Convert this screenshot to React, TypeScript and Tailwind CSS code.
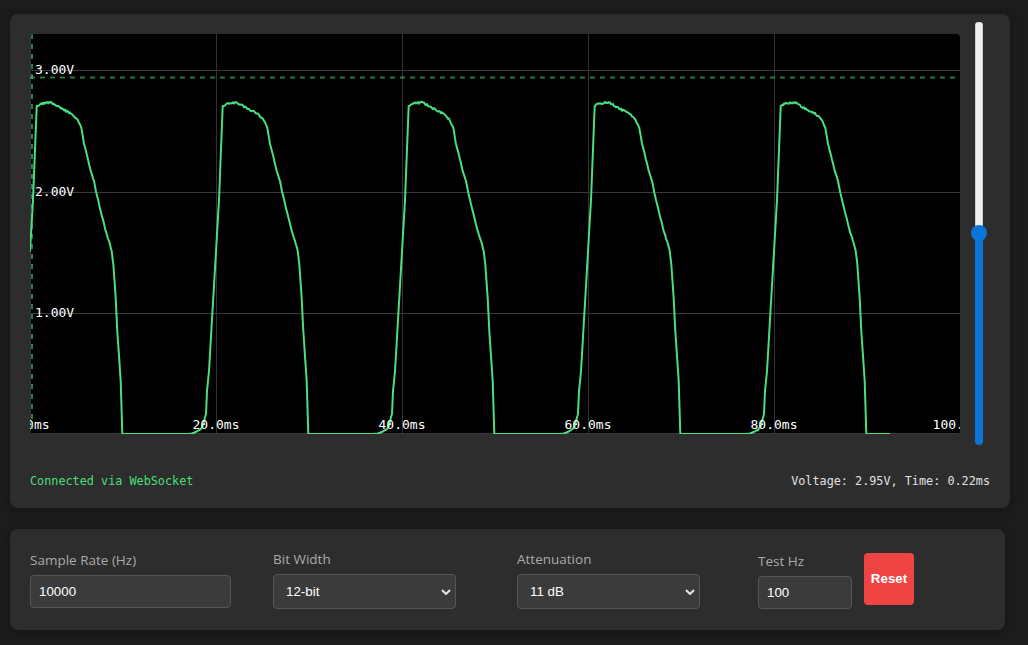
import React from "react";

// Scope geometry (canvas pixels)
const W = 930;
const H = 400;
const VMAX = 3.3;
const PERIOD_PX = 186; // 20 ms per division
const DATA_END = 860;

const vy = (v: number) => H * (1 - v / VMAX);

// One period of the captured waveform, [dx from rising edge, y on canvas]
const PROFILE: [number, number][] = [
  [-30, 400], [-25, 399.7], [-20, 398], [-14, 394], [-10, 380], [-9, 357], [-7, 337],
  [3, 166], [6.7, 72], [10.7, 69.7], [20.7, 68.3], [30.7, 74.3], [40.7, 79.3],
  [47.3, 85.3], [51.3, 93.7], [54, 110], [56.7, 120], [60.7, 137], [64, 147],
  [66.3, 158.7], [70.7, 177], [75.7, 197], [79, 207], [81.7, 217], [83.3, 230],
  [85.7, 264], [87.3, 297], [90.7, 347], [92.3, 400], [156, 400],
];

const hash = (n: number) => {
  const s = Math.sin(n * 127.1 + 311.7) * 43758.5453;
  return s - Math.floor(s) - 0.5;
};

function sampleProfile(dx: number) {
  for (let i = 0; i < PROFILE.length - 1; i++) {
    const [x0, y0] = PROFILE[i];
    const [x1, y1] = PROFILE[i + 1];
    if (dx >= x0 && dx <= x1) {
      const t = x1 === x0 ? 0 : (dx - x0) / (x1 - x0);
      return y0 + (y1 - y0) * t;
    }
  }
  return H;
}

function buildTrace() {
  const xs = new Set<number>();
  for (let x = 0; x <= DATA_END; x++) xs.add(x);
  for (let k = 0; k < 5; k++) {
    PROFILE.forEach(([dx]) => {
      const x = k * PERIOD_PX + dx;
      if (x >= 0 && x <= DATA_END) xs.add(x);
    });
  }
  const sorted = Array.from(xs).sort((a, b) => a - b);
  return sorted
    .map((x) => {
      const k = Math.floor((x + 30) / PERIOD_PX);
      const dx = x - k * PERIOD_PX;
      let y = sampleProfile(dx);
      const isVertex = PROFILE.some(([px]) => Math.abs(px - dx) < 0.01);
      if (!isVertex && y < 396) {
        const amp = dx > 5 && dx < 50 ? 1.8 : dx < -8 ? 2.4 : 1.2;
        y += hash(x) * amp;
      }
      return `${x.toFixed(1)},${y.toFixed(1)}`;
    })
    .join(" ");
}

const TRACE = buildTrace();

function Scope() {
  const volts = [1, 2, 3];
  const divs = [0, 1, 2, 3, 4, 5];
  return (
    <div className="h-[400px] w-[930px] shrink-0 overflow-hidden rounded-[4px] bg-black">
      <svg width={W} height={H} className="block font-['DejaVu_Sans_Mono',monospace] text-[13px]">
        {/* grid */}
        {volts.map((v) => (
          <line key={`h${v}`} x1={0} x2={W} y1={Math.round(vy(v)) + 0.5} y2={Math.round(vy(v)) + 0.5} stroke="#3a3a3a" strokeWidth={1} />
        ))}
        <line x1={0} x2={W} y1={H - 0.5} y2={H - 0.5} stroke="#3a3a3a" strokeWidth={1} />
        {divs.map((d) => (
          <line key={`v${d}`} x1={d * PERIOD_PX + 0.5} x2={d * PERIOD_PX + 0.5} y1={0} y2={H} stroke="#333" strokeWidth={1} />
        ))}

        {/* voltage labels */}
        {volts.map((v) => (
          <text key={`lv${v}`} x={5} y={vy(v) + 4} fill="#fff">
            {v.toFixed(2)}V
          </text>
        ))}

        {/* signal */}
        <polyline points={TRACE} fill="none" stroke="#4ade80" strokeWidth={2} strokeLinejoin="round" />

        {/* time labels */}
        {divs.map((d) => (
          <text key={`lt${d}`} x={d * PERIOD_PX} y={395} fill="#fff" textAnchor="middle">
            {(d * 20).toFixed(1)}ms
          </text>
        ))}

        {/* cursor */}
        <line x1={0} x2={W} y1={43.5} y2={43.5} stroke="#4ade80" strokeOpacity={0.55} strokeWidth={2} strokeDasharray="5 5" />
        <line x1={2} x2={2} y1={0} y2={H} stroke="#4ade80" strokeOpacity={0.55} strokeWidth={2} strokeDasharray="5 5" />
      </svg>
    </div>
  );
}

function VerticalSlider() {
  return (
    <div className="relative ml-[11px] flex h-[423px] w-[16px] justify-center">
      <div className="flex h-full w-[8px] flex-col overflow-hidden rounded-full">
        <div className="flex-1 bg-[#efefef] shadow-[inset_0_0_0_1px_#cdcdcd]" />
        <div className="h-[212px] bg-[#0a75d6]" />
      </div>
      <div className="absolute left-0 top-[203px] h-4 w-4 rounded-full bg-[#0a75d6]" />
    </div>
  );
}

function Chevron() {
  return (
    <svg width="10" height="6" viewBox="0 0 10 6" className="pointer-events-none absolute right-[5px] top-1/2 -translate-y-1/2">
      <path d="M1 1 L5 5 L9 1" fill="none" stroke="#e5e5e5" strokeWidth="2" />
    </svg>
  );
}

const labelCls = "mb-[5px] block font-['Open_Sans',sans-serif] text-[13.5px] leading-[20px] text-[#aaaaaa]";
const fieldCls =
  "rounded-[4px] border border-[#555] bg-[#3b3b3b] font-['Liberation_Sans',Arial,sans-serif] text-[13.333px] text-white outline-none";

function SelectField({ label, value, options }: { label: string; value: string; options: string[] }) {
  return (
    <div>
      <label className={labelCls}>{label}</label>
      <div className="relative w-[183px]">
        <select
          defaultValue={value}
          className={`${fieldCls} h-[35px] w-full appearance-none pl-[12px] pr-6`}
        >
          {options.map((o) => (
            <option key={o}>{o}</option>
          ))}
        </select>
        <Chevron />
      </div>
    </div>
  );
}

export default function App() {
  return (
    <div className="min-h-[645px] bg-[#1c1c1c] px-[10px] pt-[14px]">
      {/* Scope card */}
      <div className="w-[1000px] rounded-[8px] bg-[#2d2d2d] px-[20px] pb-[19px] pt-[8px] shadow-[0_2px_8px_rgba(0,0,0,0.35)]">
        <div className="flex items-center">
          <Scope />
          <VerticalSlider />
        </div>
        <div className="mt-[28px] flex justify-between font-['DejaVu_Sans_Mono',monospace] text-[11.8px] leading-[16px]">
          <span className="text-[#4ade80]">Connected via WebSocket</span>
          <span className="text-[#e0e0e0]">Voltage: 2.95V, Time: 0.22ms</span>
        </div>
      </div>

      {/* Controls card */}
      <div className="mt-[21px] w-[995px] rounded-[8px] bg-[#2d2d2d] px-[20px] pb-[21px] pt-[20px] shadow-[0_2px_8px_rgba(0,0,0,0.35)]">
        <div className="grid grid-cols-[243px_244px_241px_auto] items-center">
          <div>
            <label className={labelCls}>Sample Rate (Hz)</label>
            <input defaultValue="10000" className={`${fieldCls} h-[33px] w-[201px] px-[8px]`} />
          </div>
          <SelectField label="Bit Width" value="12-bit" options={["9-bit", "10-bit", "11-bit", "12-bit"]} />
          <SelectField label="Attenuation" value="11 dB" options={["0 dB", "2.5 dB", "6 dB", "11 dB"]} />
          <div className="flex items-center gap-[12px]">
            <div className="pt-[2px]">
              <label className={labelCls}>Test Hz</label>
              <input defaultValue="100" className={`${fieldCls} h-[33px] w-[94px] px-[8px]`} />
            </div>
            <button className="h-[52px] w-[50px] rounded-[4px] bg-[#ef4444] font-['Liberation_Sans',Arial,sans-serif] text-[13.333px] font-bold text-white">
              Reset
            </button>
          </div>
        </div>
      </div>
    </div>
  );
}
